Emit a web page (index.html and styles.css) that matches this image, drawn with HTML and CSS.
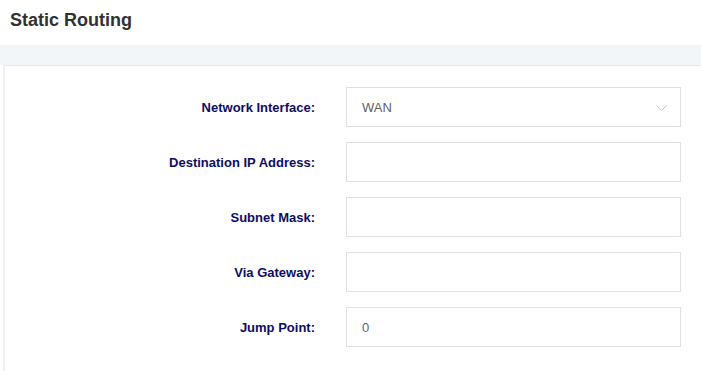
FILE: index.html
```html
<!DOCTYPE html>
<html>
<head>
<meta charset="utf-8">
<link rel="stylesheet" href="styles.css">
</head>
<body>
<header class="page-header">
  <h1 class="title">Static Routing</h1>
</header>
<div class="band"></div>
<main class="card">
  <form class="form">
    <div class="row">
      <label class="label">Network Interface:</label>
      <div class="field select">
        <span class="value">WAN</span>
        <svg class="chevron" width="11" height="6" viewBox="0 0 11 6"><path d="M0.5 0.5 L5.5 5.5 L10.5 0.5" fill="none" stroke="#c0c4cc" stroke-width="1"/></svg>
      </div>
    </div>
    <div class="row">
      <label class="label">Destination IP Address:</label>
      <div class="field"></div>
    </div>
    <div class="row">
      <label class="label">Subnet Mask:</label>
      <div class="field"></div>
    </div>
    <div class="row">
      <label class="label">Via Gateway:</label>
      <div class="field"></div>
    </div>
    <div class="row">
      <label class="label">Jump Point:</label>
      <div class="field"><span class="value">0</span></div>
    </div>
  </form>
</main>
</body>
</html>
```

FILE: styles.css
```css
* { box-sizing: border-box; }
html, body { margin: 0; padding: 0; background: #fff; }
body { font-family: "Liberation Sans", Arial, sans-serif; }
.page-header {
  height: 45px;
  padding: 9px 10px 0;
}
.title {
  margin: 0;
  font-size: 18px;
  font-weight: bold;
  color: #303133;
  line-height: 22px;
}
.band {
  height: 20px;
  background: #f3f6f9;
}
.card {
  margin-left: 3px;
  border-top: 1px solid #e4e9ef;
  border-left: 2px solid #eef1f5;
  background: #fff;
  padding: 21px 0 24px;
}
.form {
  display: flex;
  flex-direction: column;
  gap: 15px;
}
.row {
  display: flex;
  align-items: center;
}
.label {
  width: 341px;
  padding-right: 31px;
  text-align: right;
  font-size: 13px;
  font-weight: bold;
  color: #0d0d63;
}
.field {
  width: 335px;
  height: 40px;
  border: 1px solid #dcdfe6;
  display: flex;
  align-items: center;
  justify-content: space-between;
  padding: 0 13px 0 15px;
}
.value {
  font-size: 13px;
  color: #606266;
}
.chevron { display: block; margin-top: 2px; }
```
